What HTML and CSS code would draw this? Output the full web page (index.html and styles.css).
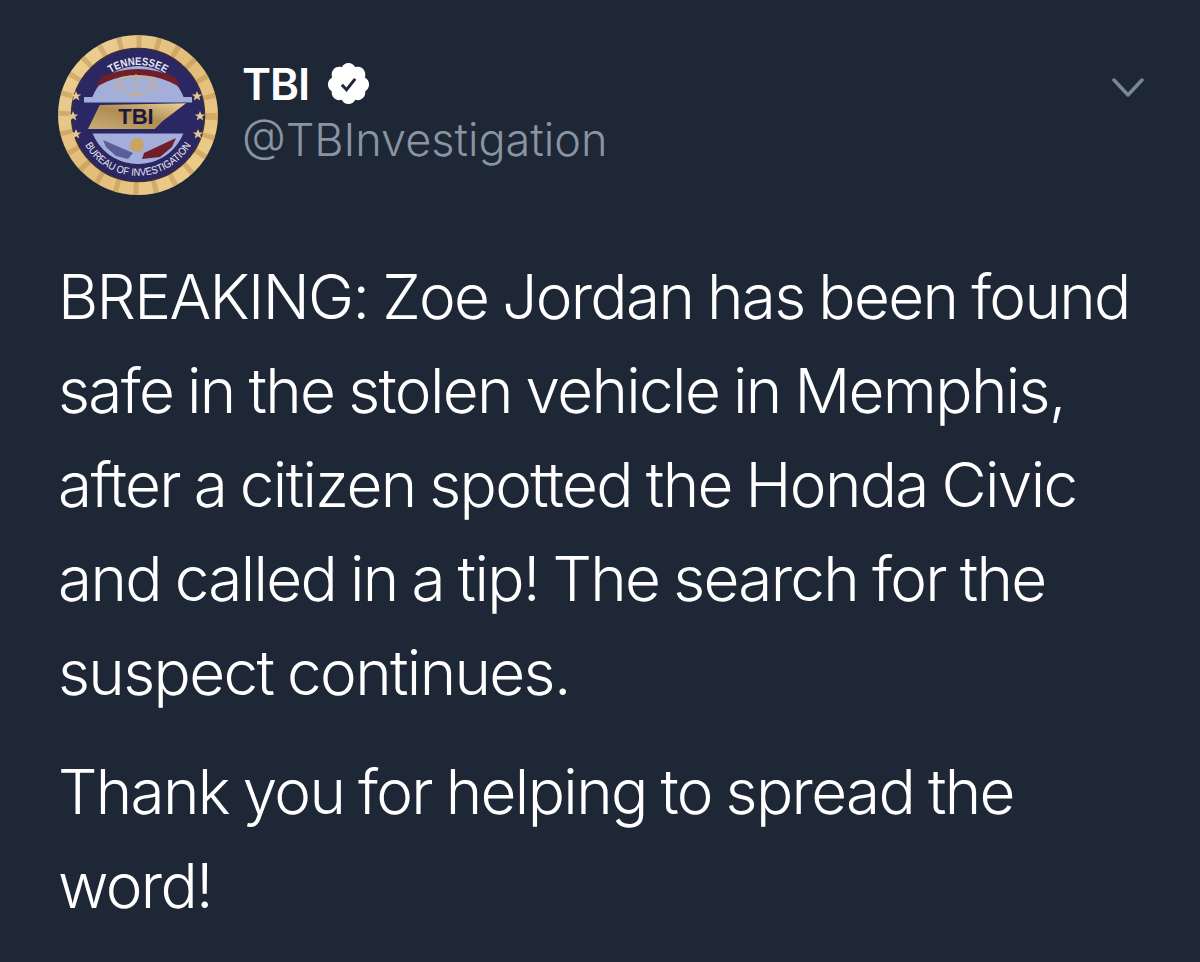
FILE: index.html
```html
<!DOCTYPE html>
<html lang="en">
<head>
  <meta charset="UTF-8">
  <title>TBI tweet</title>
  <link rel="stylesheet" href="styles.css">
</head>
<body>
  <div class="tweet">
    <div class="tweet-header">
      <svg class="avatar" viewBox="0 0 160 160" width="160" height="160">
        <defs>
          <linearGradient id="gold" x1="0" y1="0" x2="1" y2="1">
            <stop offset="0" stop-color="#f0d59c"/>
            <stop offset="0.5" stop-color="#e2bc78"/>
            <stop offset="1" stop-color="#f0d190"/>
          </linearGradient>
          <linearGradient id="plate" x1="0" y1="1" x2="1" y2="0">
            <stop offset="0" stop-color="#c9ae78"/>
            <stop offset="0.5" stop-color="#b08d50"/>
            <stop offset="1" stop-color="#ecd49a"/>
          </linearGradient>
          <path id="arcTop" d="M 30 80 A 50 50 0 0 1 130 80"/>
          <path id="arcBottom" d="M 27 110 A 61 61 0 0 0 133 110"/>
          <path id="star" d="M0-5l1.4 3.5h3.8l-3 2.3 1.1 3.8-3.3-2.3-3.3 2.3 1.1-3.8-3-2.3h3.8z"/>
        </defs>
        <circle cx="80" cy="80" r="80" fill="url(#gold)"/>
        <circle cx="80" cy="80" r="73" fill="none" stroke="#b98a4a" stroke-width="14" stroke-dasharray="5 14" opacity="0.45"/>
        <circle cx="80" cy="80" r="66.5" fill="#2b2763" stroke="#3a2f3a" stroke-width="1.5"/>
        <circle cx="80" cy="80" r="49" fill="#a3aedb"/>
        <rect x="26" y="62" width="108" height="6" fill="#a3aedb"/>
        <rect x="18" y="67.5" width="124" height="31" fill="#2b2763"/>
        <text class="seal-top"><textPath href="#arcTop" startOffset="50%" text-anchor="middle" textLength="58" lengthAdjust="spacingAndGlyphs">TENNESSEE</textPath></text>
        <path d="M43 42 Q80 26 117 42 L122 52 L112 47 Q80 33 48 47 L38 52 Z" fill="#6e1f2a"/>
        <g fill="none" stroke="#c9b07a" stroke-width="1.3">
          <path d="M78 39 V59 M62 43 Q78 39 94 43 M62 43 L57 52 M62 43 L67 52 M94 43 L89 52 M94 43 L99 52"/>
          <path d="M57 52 Q62 57 67 52 M89 52 Q94 57 99 52 M68 60 H88"/>
        </g>
        <path d="M30 94 L41.7 70 L128 68.3 L115 78.3 L105 85.7 L96.7 94 Z" fill="url(#plate)"/>
        <text class="seal-tbi" x="78" y="89" text-anchor="middle">TBI</text>
        <g fill="#e6c98e">
          <use href="#star" x="18" y="61"/>
          <use href="#star" x="15" y="81"/>
          <use href="#star" x="18" y="99"/>
          <use href="#star" x="139" y="61"/>
          <use href="#star" x="142" y="81"/>
          <use href="#star" x="140" y="99"/>
        </g>
        <path d="M45 105 L75 118 L70 124 L58 121 L48 112 Z" fill="#5a5f98"/>
        <path d="M118 103 L86 118 L84 124 L102 122 L114 112 Z" fill="#6e1f2a"/>
        <circle cx="79" cy="110" r="7" fill="#c9a463"/>
        <text class="seal-bottom"><textPath href="#arcBottom" startOffset="50%" text-anchor="middle" textLength="128" lengthAdjust="spacingAndGlyphs">BUREAU OF INVESTIGATION</textPath></text>
      </svg>
      <div class="names">
        <div class="display-name">TBI
          <svg class="badge" viewBox="0 0 24 24" width="47" height="47">
            <path fill="#fff" d="M22.5 12.5c0-1.58-.875-2.95-2.148-3.6.154-.435.238-.905.238-1.4 0-2.21-1.71-3.998-3.818-3.998-.47 0-.92.084-1.336.25C14.818 2.415 13.51 1.5 12 1.5s-2.816.917-3.437 2.25c-.415-.165-.866-.25-1.336-.25-2.11 0-3.818 1.79-3.818 4 0 .494.083.964.237 1.4-1.272.65-2.147 2.018-2.147 3.6 0 1.495.782 2.798 1.942 3.486-.02.17-.032.34-.032.514 0 2.21 1.708 4 3.818 4 .47 0 .92-.086 1.335-.25.62 1.334 1.926 2.25 3.437 2.25 1.512 0 2.818-.916 3.437-2.25.415.163.865.248 1.336.248 2.11 0 3.818-1.79 3.818-4 0-.174-.012-.344-.033-.513 1.158-.687 1.943-1.99 1.943-3.484z"/>
            <path fill="none" stroke="#1e2735" stroke-width="1.5" d="M8.6 12.6l2.4 2.6 4.4-5.6"/>
          </svg>
        </div>
        <div class="handle">@TBInvestigation</div>
      </div>
      <svg class="caret" viewBox="0 0 32 24" width="32" height="24">
        <path d="M2 3 L16 18 L30 3" fill="none" stroke="#7c8796" stroke-width="3.5" stroke-linecap="round" stroke-linejoin="round"/>
      </svg>
    </div>
    <p class="tweet-text">BREAKING: Zoe Jordan has been found<br>safe in the stolen vehicle in Memphis,<br>after a citizen spotted the Honda Civic<br>and called in a tip! The search for the<br>suspect continues.</p>
    <p class="tweet-text second">Thank you for helping to spread the<br>word!</p>
  </div>
</body>
</html>
```

FILE: styles.css
```css
html, body {
  margin: 0;
  height: 100%;
}
body {
  background: #1e2735;
  font-family: Inter, "Liberation Sans", sans-serif;
  overflow: hidden;
}
.tweet {
  padding: 35px 56px 0 58px;
}
.tweet-header {
  display: flex;
  align-items: flex-start;
}
.avatar {
  flex: none;
}
.names {
  flex: 1;
  margin-left: 24px;
  padding-top: 22px;
}
.display-name {
  display: flex;
  align-items: center;
  gap: 16px;
  height: 54px;
  color: #fff;
  font-size: 44px;
  font-weight: 600;
  line-height: 54px;
  letter-spacing: -1px;
}
.badge {
  margin-top: -2px;
}
.handle {
  margin-top: 2px;
  color: #8a94a3;
  font-size: 45px;
  line-height: 54px;
  font-weight: 300;
}
.caret {
  margin-top: 42px;
}
.tweet-text {
  margin: 55px 0 0;
  color: #fff;
  font-size: 62px;
  font-weight: 300;
  line-height: 94px;
  letter-spacing: -1.66px;
  word-spacing: -2px;
}
.tweet-text.second {
  margin-top: 25px;
}
.seal-top {
  fill: #e8e8f0;
  font: 700 11px "Liberation Sans", sans-serif;
}
.seal-tbi {
  fill: #1c1840;
  font: 700 22px "Liberation Sans", sans-serif;
}
.seal-bottom {
  fill: #eceaf2;
  font: 400 10.5px "Liberation Sans", sans-serif;
}
```
